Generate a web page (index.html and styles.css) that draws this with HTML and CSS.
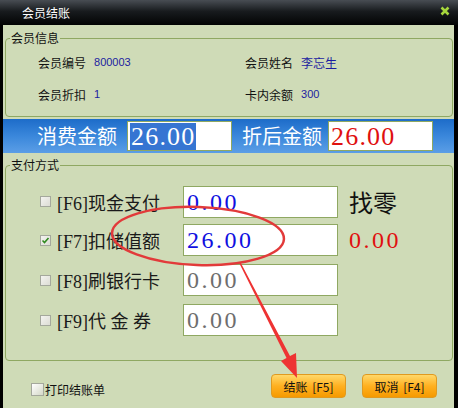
FILE: index.html
```html
<!DOCTYPE html>
<html lang="zh-CN">
<head>
    <meta charset="UTF-8">
    <meta name="viewport" content="width=device-width, initial-scale=1.0">
    <title>会员结账</title>
    <link rel="stylesheet" href="styles.css">
</head>
<body>
    <div class="window">
        <div class="titlebar">
            <span>会员结账</span>
            <svg class="close" viewBox="0 0 10 10">
                <path d="M1.5 1.5 L8.5 8.5 M8.5 1.5 L1.5 8.5" />
            </svg>
        </div>

        <div class="content">
            <fieldset class="group">
                <legend>会员信息</legend>
                <div class="info-grid">
                    <div class="info-item"><span>会员编号</span><span class="info-value">800003</span></div>
                    <div class="info-item"><span>会员姓名</span><span class="info-value">李忘生</span></div>
                    <div class="info-item"><span>会员折扣</span><span class="info-value">1</span></div>
                    <div class="info-item"><span>卡内余额</span><span class="info-value">300</span></div>
                </div>
            </fieldset>

            <div class="band">
                <span class="band-label">消费金额</span>
                <div class="band-field"><span class="selected">26.00</span></div>
                <span class="band-label">折后金额</span>
                <div class="band-field red">26.00</div>
            </div>

            <fieldset class="group group-pay">
                <legend>支付方式</legend>
                <div class="pay-list">
                    <div class="pay-row">
                        <span class="check"></span>
                        <span class="pay-label">[F6]现金支付</span>
                        <div class="field blue">0.00</div>
                        <span class="extra">找零</span>
                    </div>
                    <div class="pay-row">
                        <span class="check">
                            <svg viewBox="0 0 9 9"><path d="M1.5 4.5 L3.5 6.5 L7.5 2" /></svg>
                        </span>
                        <span class="pay-label">[F7]扣储值额</span>
                        <div class="field blue">26.00</div>
                        <span class="extra red">0.00</span>
                    </div>
                    <div class="pay-row">
                        <span class="check"></span>
                        <span class="pay-label">[F8]刷银行卡</span>
                        <div class="field">0.00</div>
                    </div>
                    <div class="pay-row">
                        <span class="check"></span>
                        <span class="pay-label">[F9]代 金 券</span>
                        <div class="field">0.00</div>
                    </div>
                </div>
            </fieldset>

            <div class="footer">
                <label class="print"><span class="check check-big"></span>打印结账单</label>
                <div class="buttons">
                    <button>结账 [F5]</button>
                    <button>取消 [F4]</button>
                </div>
            </div>
        </div>

        <!-- marcação vermelha por cima da tela -->
        <svg class="annotation" viewBox="0 0 458 408">
            <ellipse cx="198" cy="236" rx="86" ry="29" transform="rotate(2 198 236)" />
            <polygon points="240.7,262.7 290,356 296,353 297,378 281,361 286.5,358 239.3,263.3" />
        </svg>
    </div>
</body>
</html>
```

FILE: styles.css
```css
* {
    box-sizing: border-box;
}

body {
    margin: 0;
    background: #000;
    font-family: "Noto Sans CJK SC", sans-serif;
    font-size: 12px;
    color: #111;
}

.window {
    position: relative;
    width: 458px;
    height: 408px;
    background: #000;
    overflow: hidden;
}

.titlebar {
    height: 25px;
    display: flex;
    align-items: center;
    justify-content: space-between;
    padding: 0 8px 0 22px;
    background: linear-gradient(#484d53, #181b1e 45%, #020303);
    color: #fff;
    font-size: 12px;
}

.close {
    width: 10px;
    height: 10px;
    margin-top: -3px;
}

.close path {
    stroke: #a6d63c;
    stroke-width: 2.6;
    fill: none;
}

.content {
    height: 383px;
    margin: 0 4px 0 3px;
    padding-top: 6px;
    background: #cfdbb7;
}

.group {
    margin: 0 1px 0 2px;
    padding: 0;
    min-width: 0;
    border: 1px solid #8fa862;
    border-radius: 4px;
}

.group legend {
    margin-left: 4px;
    padding: 0 1px;
    font-size: 12px;
    line-height: 14px;
    color: #111;
}

.info-grid {
    display: grid;
    grid-template-columns: 207px auto;
    grid-auto-rows: 32px;
    padding: 1px 0 6px 32px;
}

.info-item {
    display: flex;
    align-items: center;
}

.info-value {
    margin-left: 8px;
    color: #1c1ca0;
    font-family: "Liberation Sans", "Noto Sans CJK SC", sans-serif;
    font-size: 11px;
}

.info-item:nth-child(2) .info-value {
    font-family: "Noto Sans CJK SC", sans-serif;
    font-size: 12px;
}

.band {
    display: flex;
    align-items: center;
    height: 34px;
    margin-top: 2px;
    padding-left: 34px;
    background: linear-gradient(#1d6cc9, #3a87db 50%, #5b9ee6);
}

.band-label {
    width: 90px;
    color: #fff;
    font-size: 20px;
    line-height: 30px;
}

.band-label + .band-field {
    margin-right: 10px;
}

.band-field + .band-label {
    width: 86px;
}

.band-field {
    width: 105px;
    height: 30px;
    padding: 1px 0 0 2px;
    background: #fff;
    border: 1px solid #8fa862;
    font-family: "Liberation Serif", serif;
    font-size: 26px;
    line-height: 27px;
    letter-spacing: 1.2px;
    color: #111;
}

.selected {
    display: inline-block;
    padding-left: 1px;
    background: #3675d2;
    color: #fff;
}

.red {
    color: #e01010;
}

.group-pay {
    margin-top: 5px;
}

.pay-list {
    display: flex;
    flex-direction: column;
    gap: 8px;
    padding: 12px 0 24px 34px;
}

.pay-row {
    display: grid;
    grid-template-columns: 17px 126px 166px auto;
    align-items: center;
    height: 32px;
}

.check {
    display: inline-flex;
    align-items: center;
    justify-content: center;
    width: 11px;
    height: 11px;
    border: 1px solid #a4a89c;
    background: linear-gradient(135deg, #f4f4f0, #dcdcd4);
}

.check svg {
    width: 9px;
    height: 9px;
}

.check path {
    stroke: #2f8a1e;
    stroke-width: 1.6;
    fill: none;
}

.pay-label {
    font-family: "Liberation Serif", "Noto Sans CJK SC", serif;
    font-size: 18px;
    color: #1a1a1a;
    white-space: pre;
}

.field {
    width: 155px;
    height: 32px;
    padding-left: 3px;
    background: #fff;
    border: 1px solid #8fa862;
    font-family: "Liberation Serif", serif;
    font-size: 24px;
    line-height: 30px;
    letter-spacing: 2.5px;
    color: #6e6e6e;
}

.field.blue {
    color: #1010e0;
}

.extra {
    font-size: 24px;
    color: #111;
}

.extra.red {
    font-family: "Liberation Serif", serif;
    font-size: 24px;
    letter-spacing: 2.5px;
    color: #e01010;
}

.footer {
    display: flex;
    align-items: center;
    justify-content: space-between;
    padding: 13px 17px 0 28px;
}

.print {
    display: flex;
    align-items: center;
    margin-top: 6px;
    font-size: 12px;
}

.check-big {
    width: 13px;
    height: 13px;
    margin-right: 1px;
    background: linear-gradient(135deg, #fff, #d4d8c8);
}

.buttons {
    display: flex;
    gap: 16px;
}

button {
    width: 75px;
    height: 24px;
    padding: 0;
    border: 1px solid #e09a20;
    border-radius: 4px;
    background: linear-gradient(#ffd86a, #ffb020 50%, #f59a00);
    font-family: "Noto Sans CJK SC", sans-serif;
    font-size: 12px;
    color: #111;
    word-spacing: 2px;
}

.annotation {
    position: absolute;
    top: 0;
    left: 0;
    width: 458px;
    height: 408px;
    pointer-events: none;
}

.annotation ellipse {
    fill: none;
    stroke: #e23a3a;
    stroke-width: 2.5;
}

.annotation polygon {
    fill: #ee3333;
}
```
